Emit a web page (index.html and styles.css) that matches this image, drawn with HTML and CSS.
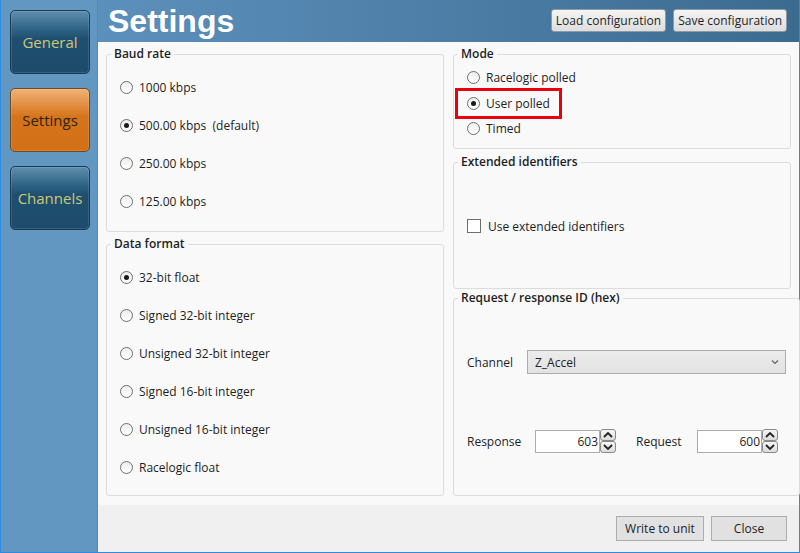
FILE: index.html
```html
<!DOCTYPE html>
<html lang="en">
<head>
  <meta charset="UTF-8">
  <title>Settings</title>
  <link rel="stylesheet" href="styles.css">
</head>
<body>
  <div class="window">
    <nav class="sidebar">
      <button class="nav-btn">General</button>
      <button class="nav-btn active">Settings</button>
      <button class="nav-btn">Channels</button>
    </nav>

    <div class="main">
      <header class="header">
        <h1>Settings</h1>
        <div class="header-actions">
          <button class="btn">Load configuration</button>
          <button class="btn">Save configuration</button>
        </div>
      </header>

      <div class="content">
        <div class="column">
          <fieldset class="group baud">
            <legend>Baud rate</legend>
            <label class="option"><span class="radio"></span>1000 kbps</label>
            <label class="option"><span class="radio checked"></span>500.00 kbps&nbsp;&nbsp;(default)</label>
            <label class="option"><span class="radio"></span>250.00 kbps</label>
            <label class="option"><span class="radio"></span>125.00 kbps</label>
          </fieldset>

          <fieldset class="group format">
            <legend>Data format</legend>
            <label class="option"><span class="radio checked"></span>32-bit float</label>
            <label class="option"><span class="radio"></span>Signed 32-bit integer</label>
            <label class="option"><span class="radio"></span>Unsigned 32-bit integer</label>
            <label class="option"><span class="radio"></span>Signed 16-bit integer</label>
            <label class="option"><span class="radio"></span>Unsigned 16-bit integer</label>
            <label class="option"><span class="radio"></span>Racelogic float</label>
          </fieldset>
        </div>

        <div class="column">
          <fieldset class="group mode">
            <legend>Mode</legend>
            <label class="option small"><span class="radio"></span>Racelogic polled</label>
            <label class="option small highlighted"><span class="radio checked"></span>User polled<span class="marker"></span></label>
            <label class="option small"><span class="radio"></span>Timed</label>
          </fieldset>

          <fieldset class="group extended">
            <legend>Extended identifiers</legend>
            <label class="option"><span class="checkbox"></span>Use extended identifiers</label>
          </fieldset>

          <fieldset class="group ids">
            <legend>Request / response ID (hex)</legend>
            <div class="field-row">
              <span class="field-label">Channel</span>
              <div class="combo">
                <span>Z_Accel</span>
                <svg width="8" height="6" viewBox="0 0 8 6"><path d="M1 1.5 L4 4.5 L7 1.5" fill="none" stroke="#666" stroke-width="1.2"/></svg>
              </div>
            </div>
            <div class="field-row spin-row">
              <span class="field-label">Response</span>
              <div class="spin">
                <span class="spin-value">603</span>
                <div class="spin-buttons">
                  <span class="spin-btn"><svg width="12" height="8" viewBox="0 0 12 8"><path d="M2 6 L6 2 L10 6" fill="none" stroke="#222" stroke-width="1.8"/></svg></span>
                  <span class="spin-btn"><svg width="12" height="8" viewBox="0 0 12 8"><path d="M2 2 L6 6 L10 2" fill="none" stroke="#222" stroke-width="1.8"/></svg></span>
                </div>
              </div>
              <span class="field-label second">Request</span>
              <div class="spin">
                <span class="spin-value">600</span>
                <div class="spin-buttons">
                  <span class="spin-btn"><svg width="12" height="8" viewBox="0 0 12 8"><path d="M2 6 L6 2 L10 6" fill="none" stroke="#222" stroke-width="1.8"/></svg></span>
                  <span class="spin-btn"><svg width="12" height="8" viewBox="0 0 12 8"><path d="M2 2 L6 6 L10 2" fill="none" stroke="#222" stroke-width="1.8"/></svg></span>
                </div>
              </div>
            </div>
          </fieldset>
        </div>
      </div>

      <footer class="footer">
        <button class="btn flat">Write to unit</button>
        <button class="btn flat close">Close</button>
      </footer>
    </div>
  </div>
</body>
</html>
```

FILE: styles.css
```css
* {
  box-sizing: border-box;
  margin: 0;
  padding: 0;
}

body {
  font-family: "Open Sans", "Noto Sans", sans-serif;
  font-size: 12px;
  color: #1e1e1e;
  background: #ffffff;
}

.window {
  display: flex;
  width: 800px;
  height: 553px;
  border: 1px solid #2d8be0;
  border-top: none;
}

/* left navigation */
.sidebar {
  width: 97px;
  background-color: #6297c2;
  border-right: 1px solid #5587b1;
  display: flex;
  flex-direction: column;
  gap: 14px;
  padding: 10px 0 0 9px;
}

.nav-btn {
  width: 80px;
  height: 64px;
  border: 1px solid #1a3a52;
  border-radius: 5px;
  background: linear-gradient(#5f8fae 0%, #2f6587 28%, #1f4f70 45%, #1c4b6b 100%);
  color: #cfc775;
  font-family: "Open Sans", sans-serif;
  font-size: 15px;
  box-shadow: inset 0 0 0 1px rgba(255, 255, 255, 0.12);
}

.nav-btn.active {
  background: linear-gradient(#f0b277 0%, #e08c3e 28%, #d5741a 45%, #d27018 100%);
  border-color: #6d4a24;
  color: #2c2418;
}

/* main area */
.main {
  flex: 1;
  display: flex;
  flex-direction: column;
}

.header {
  height: 42px;
  background: linear-gradient(to right, #5c90bc, #3c6b90);
  display: flex;
  justify-content: space-between;
  padding: 0 12px 0 10px;
}

.header h1 {
  font-family: "Liberation Sans", Arial, sans-serif;
  font-size: 32px;
  font-weight: bold;
  color: #ffffff;
  line-height: 40px;
  margin-top: 1px;
}

.header-actions {
  display: flex;
  gap: 7px;
  padding-top: 9px;
}

.btn {
  height: 23px;
  padding: 0 4px;
  font-family: "Open Sans", sans-serif;
  font-size: 12px;
  color: #1e1e1e;
  background: linear-gradient(#f4f4f4, #dedede);
  border: 1px solid #8f9aa4;
  border-radius: 3px;
}

.content {
  flex: 1;
  background-color: #f9f9f9;
  display: flex;
  gap: 9px;
  padding: 4px 8px 0 8px;
}

.column {
  width: 338px;
  display: flex;
  flex-direction: column;
}

.group {
  border: 1px solid #dcdcdc;
  border-radius: 3px;
  padding: 0 13px;
}

.group legend {
  font-weight: 600;
  font-size: 12px;
  line-height: 16px;
  padding: 0 3px;
  margin-left: -9px;
}

.baud {
  height: 186px;
  padding-top: 6px;
}

.format {
  height: 260px;
  margin-top: 4px;
  padding-top: 6px;
}

.mode {
  height: 103px;
  padding-top: 3px;
}

.extended {
  height: 135px;
  margin-top: 5px;
  padding-top: 37px;
}

.ids {
  height: 206px;
  margin-top: 1px;
  padding-top: 44px;
}

.option {
  display: flex;
  align-items: center;
  height: 38px;
  gap: 6px;
}

.option.small {
  height: 25.5px;
}

.radio {
  width: 13px;
  height: 13px;
  border-radius: 50%;
  border: 1px solid #6e6e6e;
  background: linear-gradient(#eeeeee, #ffffff);
  display: flex;
  align-items: center;
  justify-content: center;
}

.radio.checked::after {
  content: "";
  width: 5px;
  height: 5px;
  border-radius: 50%;
  background-color: #1a1a1a;
}

.checkbox {
  width: 14px;
  height: 14px;
  border: 1px solid #6e6e6e;
  background: #ffffff;
  margin-right: 1px;
}

.highlighted {
  position: relative;
}

.marker {
  position: absolute;
  left: -12px;
  top: -3px;
  width: 107px;
  height: 31px;
  border: 3px solid #e8000c;
}

.field-row {
  display: flex;
  align-items: center;
}

.field-label {
  width: 60px;
}

.field-label.second {
  width: 61px;
  margin-left: 20px;
}

.combo {
  width: 259px;
  height: 24px;
  background: linear-gradient(#ececec, #e2e2e2);
  border: 1px solid #acacac;
  display: flex;
  align-items: center;
  justify-content: space-between;
  padding: 0 6px 0 7px;
}

.spin-row {
  margin-top: 55px;
}

.spin-row .field-label:first-child {
  width: 68px;
}

.spin {
  display: flex;
  align-items: center;
}

.spin-value {
  width: 65px;
  height: 23px;
  background: #ffffff;
  border: 1px solid #acacac;
  text-align: right;
  line-height: 21px;
  padding-right: 1px;
}

.spin-buttons {
  display: flex;
  flex-direction: column;
}

.spin-btn {
  width: 16px;
  height: 12px;
  border: 1px solid #8a8a8a;
  border-radius: 3px;
  background: linear-gradient(#f6f6f6, #dcdcdc);
  display: flex;
  align-items: center;
  justify-content: center;
}

.footer {
  height: 47px;
  background-color: #f0f0f0;
  display: flex;
  justify-content: flex-end;
  align-items: flex-start;
  gap: 7px;
  padding: 11px 12px 0 0;
}

.btn.flat {
  height: 25px;
  border-radius: 0;
  background: #e1e1e1;
  border-color: #adadad;
  min-width: 88px;
}

.btn.close {
  width: 76px;
  min-width: 76px;
}
```
